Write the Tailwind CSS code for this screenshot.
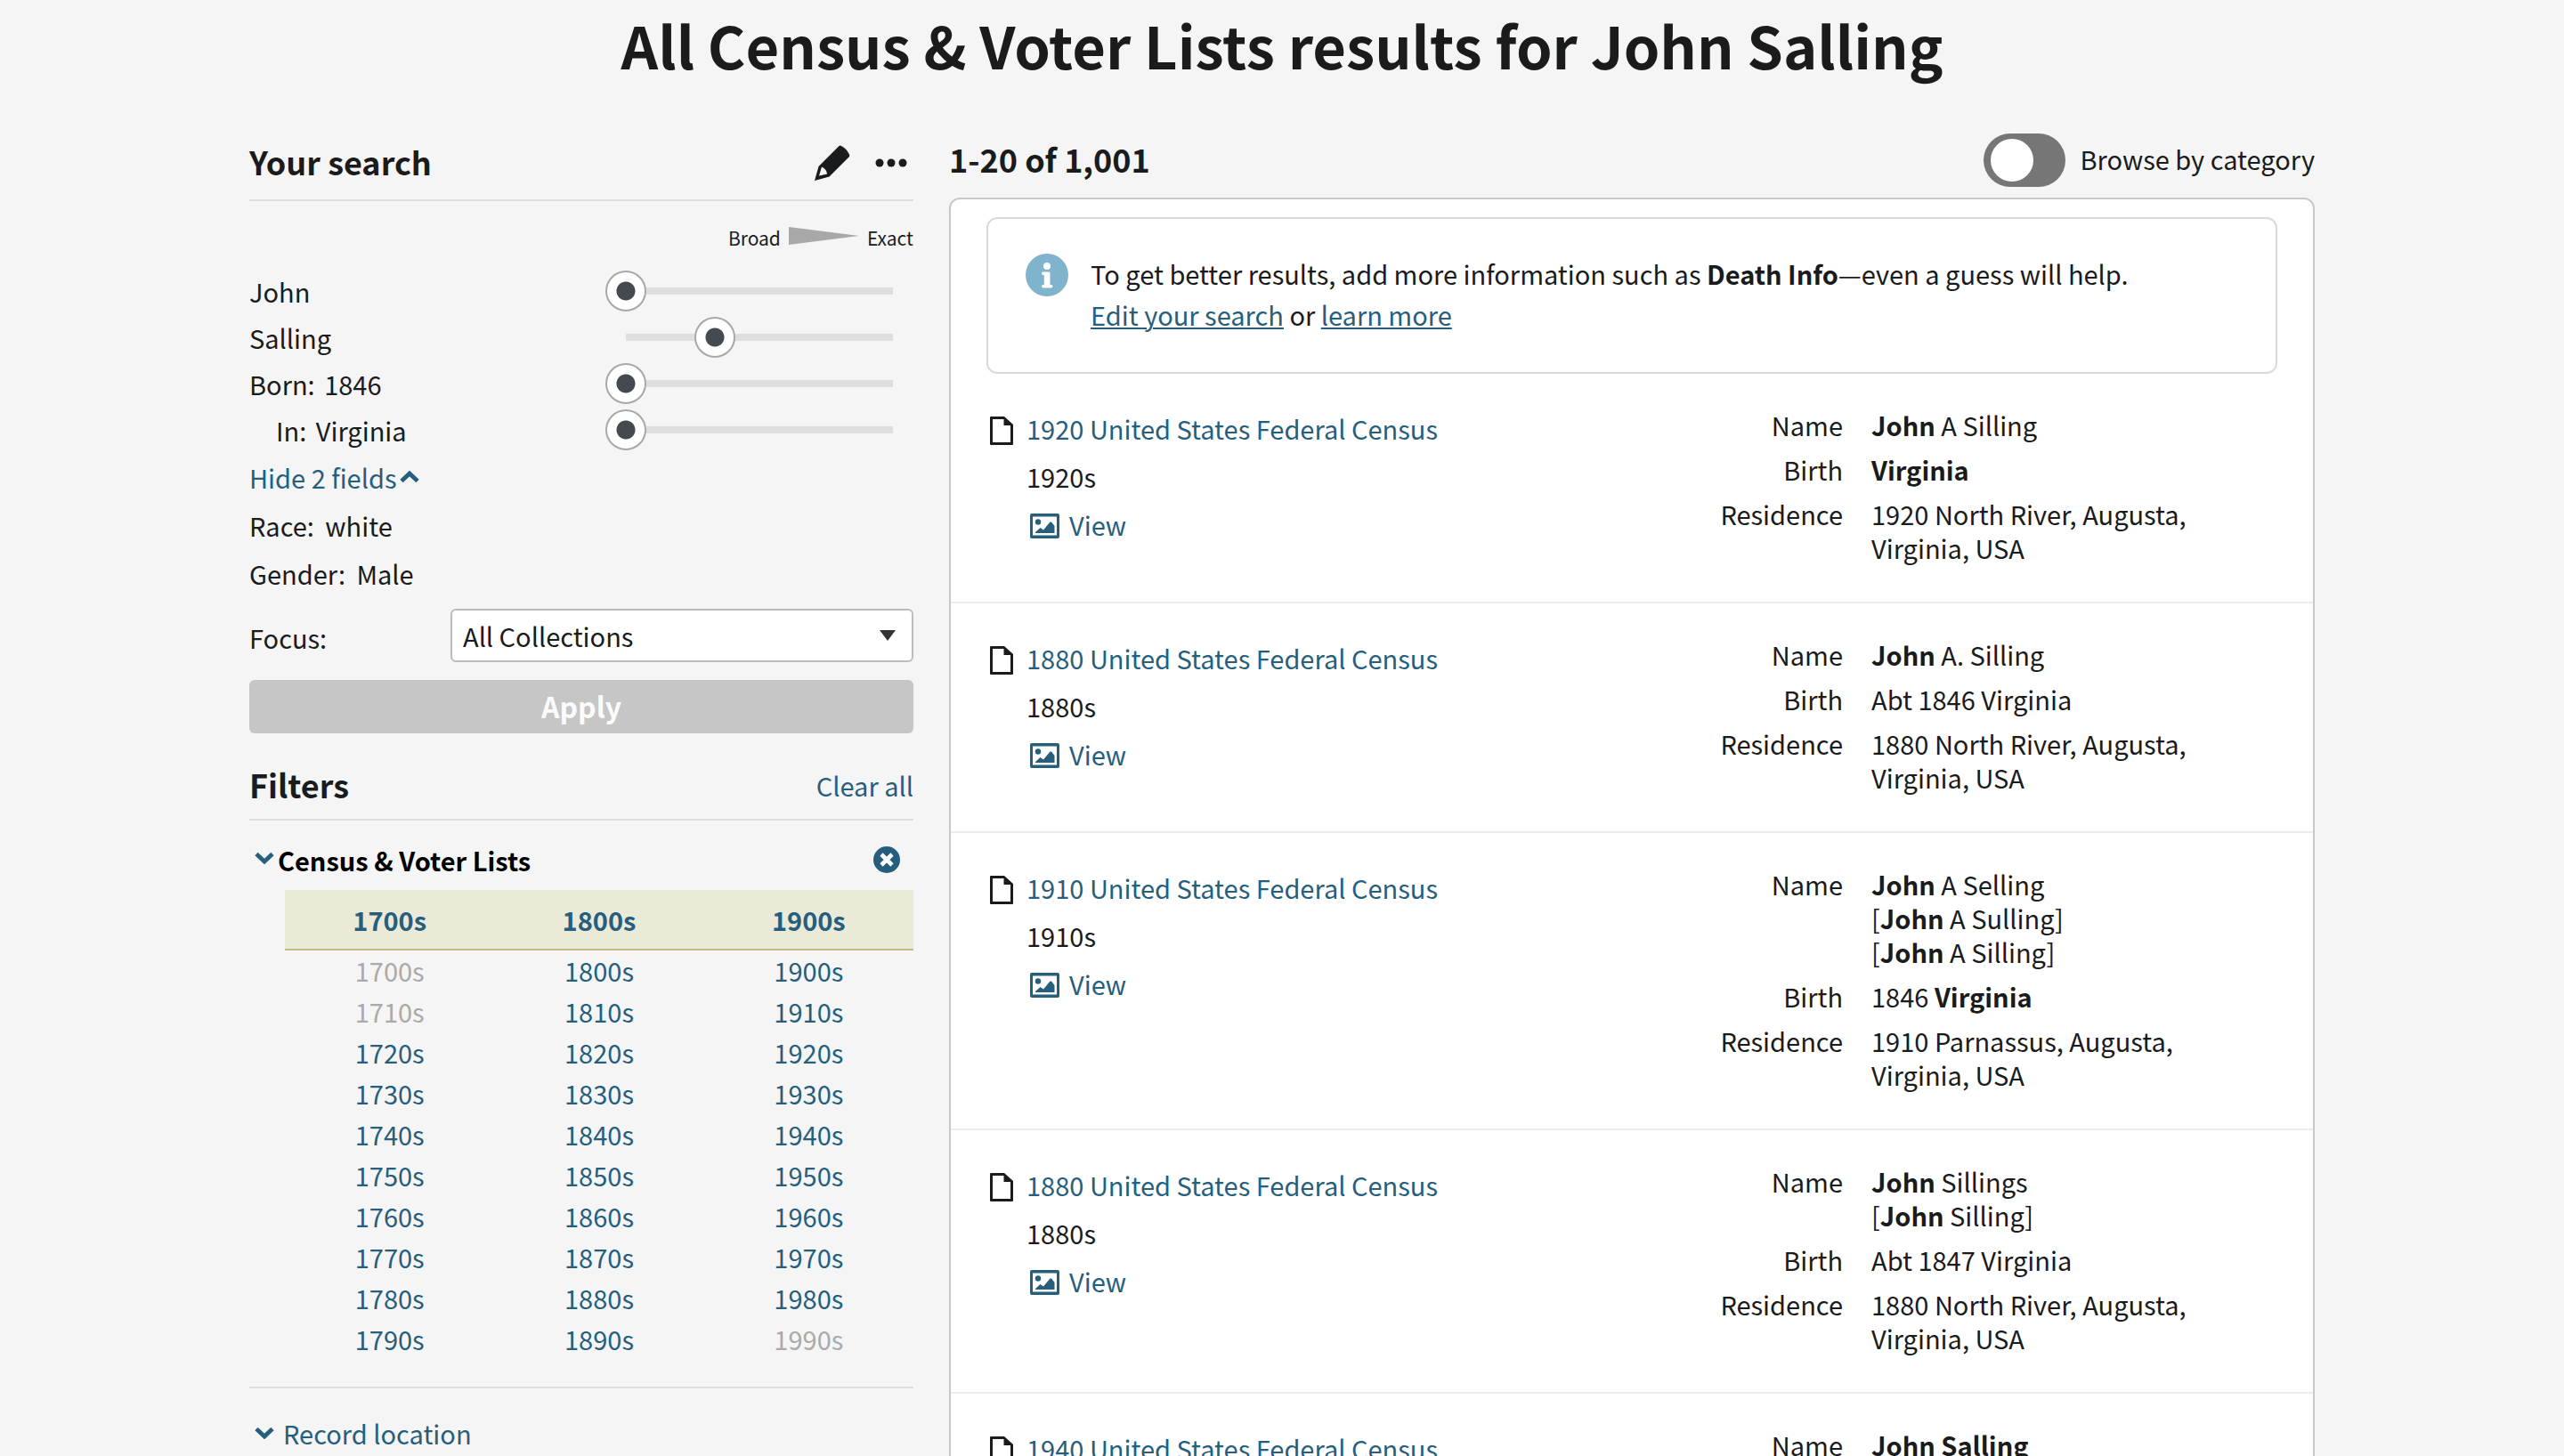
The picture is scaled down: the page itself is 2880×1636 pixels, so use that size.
<!DOCTYPE html>
<html lang="en">
<head>
<meta charset="utf-8">
<title>All Census &amp; Voter Lists results for John Salling</title>
<script src="https://cdn.jsdelivr.net/npm/@tailwindcss/browser@4"></script>
</head>
<body class="h-screen overflow-hidden bg-[#f5f5f5] font-['Noto_Sans_CJK_SC',sans-serif] text-[29px] leading-[46px] text-[#1a1b1c]">
<svg class="hidden">
  <symbol id="chevron" viewBox="0 0 22 14"><path d="M2 2.500l9 8.500 9-8.500" fill="none" stroke="currentColor" stroke-width="4.800"/></symbol>
  <symbol id="page" viewBox="0 0 26 32"><path fill-rule="evenodd" fill="currentColor" d="M0 1Q0 0 1 0H16L26 9V31Q26 32 25 32H1Q0 32 0 31ZM3 3V29H23V10H15.500V3Z"/></symbol>
  <symbol id="image" viewBox="0 0 33 28"><path fill-rule="evenodd" fill="currentColor" d="M2 0H31Q33 0 33 2V26Q33 28 31 28H2Q0 28 0 26V2Q0 0 2 0ZM3 3.500V24.500H30V3.500Z"/><circle cx="9" cy="9.500" r="3.200" fill="currentColor"/><path fill="currentColor" d="M6 22V21L11.500 16L15 18.500L22.500 9.500H24L27.500 14V22Z"/></symbol>
</svg>
<div class="mx-auto flex w-full max-w-[2320px] flex-col">
  <h1 class="text-center text-[65px] leading-[100px] font-bold">All Census &amp; Voter Lists results for John Salling</h1>
  <div class="flex items-start gap-10 pt-[50px]">
    <aside class="w-[746px] shrink-0">
      <div class="flex h-[76px] items-center justify-between border-b-2 border-[#dedede] pb-2">
        <h2 class="pb-1 text-[36px] font-bold">Your search</h2>
        <div class="flex items-center gap-7 pr-[7px]">
          <button type="button" aria-label="Edit search"><svg class="h-10 w-10" viewBox="0 0 40 40"><path fill="#1a1b1c" fill-rule="evenodd" d="M0 40L4.500 24L27 1.500Q28.500 0 30 1Q36 4 39 10.500Q40 12 38.500 13.500L16.500 35.500ZM5 34.500L14 32.500Q13.500 27 8 24.500Z"/></svg></button>
          <button type="button" aria-label="More options"><svg class="h-9 w-9" viewBox="0 0 36 36" fill="#1a1b1c"><circle cx="5" cy="18" r="4.500"/><circle cx="18" cy="18" r="4.500"/><circle cx="31" cy="18" r="4.500"/></svg></button>
        </div>
      </div>
      <div class="flex h-[75px] items-center justify-end gap-[9px] pt-[6px] text-[21px]">
        <span>Broad</span>
        <svg class="mb-1 h-5 w-[79px]" viewBox="0 0 79 20"><path fill="#a8a8a8" d="M0 0L79 10L0 20Z"/></svg>
        <span>Exact</span>
      </div>
      <div class="flex h-[52px] items-center justify-between"><label for="r1">John</label><input id="r1" type="range" min="0" max="3" value="0" class="h-[46px] w-[346px] appearance-none bg-[linear-gradient(#dedede,#dedede)] bg-[length:300px_8px] bg-center bg-no-repeat [&::-webkit-slider-thumb]:h-[46px] [&::-webkit-slider-thumb]:w-[46px] [&::-webkit-slider-thumb]:appearance-none [&::-webkit-slider-thumb]:rounded-full [&::-webkit-slider-thumb]:border-2 [&::-webkit-slider-thumb]:border-[#a8a8a8] [&::-webkit-slider-thumb]:bg-[radial-gradient(circle,#454a50_10px,#fff_11px)]"></div>
      <div class="flex h-[52px] items-center justify-between"><label for="r2">Salling</label><input id="r2" type="range" min="0" max="3" value="1" class="h-[46px] w-[346px] appearance-none bg-[linear-gradient(#dedede,#dedede)] bg-[length:300px_8px] bg-center bg-no-repeat [&::-webkit-slider-thumb]:h-[46px] [&::-webkit-slider-thumb]:w-[46px] [&::-webkit-slider-thumb]:appearance-none [&::-webkit-slider-thumb]:rounded-full [&::-webkit-slider-thumb]:border-2 [&::-webkit-slider-thumb]:border-[#a8a8a8] [&::-webkit-slider-thumb]:bg-[radial-gradient(circle,#454a50_10px,#fff_11px)]"></div>
      <div class="flex h-[52px] items-center justify-between"><label for="r3">Born: <span class="ml-1">1846</span></label><input id="r3" type="range" min="0" max="3" value="0" class="h-[46px] w-[346px] appearance-none bg-[linear-gradient(#dedede,#dedede)] bg-[length:300px_8px] bg-center bg-no-repeat [&::-webkit-slider-thumb]:h-[46px] [&::-webkit-slider-thumb]:w-[46px] [&::-webkit-slider-thumb]:appearance-none [&::-webkit-slider-thumb]:rounded-full [&::-webkit-slider-thumb]:border-2 [&::-webkit-slider-thumb]:border-[#a8a8a8] [&::-webkit-slider-thumb]:bg-[radial-gradient(circle,#454a50_10px,#fff_11px)]"></div>
      <div class="flex h-[52px] items-center justify-between pl-[30px]"><label for="r4">In: <span class="ml-1">Virginia</span></label><input id="r4" type="range" min="0" max="3" value="0" class="h-[46px] w-[346px] appearance-none bg-[linear-gradient(#dedede,#dedede)] bg-[length:300px_8px] bg-center bg-no-repeat [&::-webkit-slider-thumb]:h-[46px] [&::-webkit-slider-thumb]:w-[46px] [&::-webkit-slider-thumb]:appearance-none [&::-webkit-slider-thumb]:rounded-full [&::-webkit-slider-thumb]:border-2 [&::-webkit-slider-thumb]:border-[#a8a8a8] [&::-webkit-slider-thumb]:bg-[radial-gradient(circle,#454a50_10px,#fff_11px)]"></div>
      <button type="button" class="flex h-[54px] items-center gap-1 text-[#265e7e]">Hide 2 fields<svg class="h-[14px] w-[22px] rotate-180"><use href="#chevron"/></svg></button>
      <p class="leading-[54px]">Race: <span class="ml-[6px]">white</span></p>
      <p class="leading-[54px]">Gender: <span class="ml-[6px]">Male</span></p>
      <div class="mt-[13px] flex items-center justify-between">
        <label for="focus" class="pt-1">Focus:</label>
        <div class="relative w-[520px]">
          <select id="focus" class="block h-[60px] w-full appearance-none rounded-md border-2 border-[#bcbcbc] bg-white pl-3 leading-[46px]"><option>All Collections</option></select>
          <svg class="pointer-events-none absolute top-6 right-5 h-3 w-[18px]" viewBox="0 0 18 12"><path fill="#333" d="M0 0H18L9 12Z"/></svg>
        </div>
      </div>
      <button type="button" class="mt-5 h-[60px] w-full rounded-md bg-[#c6c6c6] pb-[2px] text-[32px] font-bold text-[#fbfbfb]">Apply</button>
      <div class="mt-8 flex h-[66px] items-start justify-between border-b-2 border-[#dedede]">
        <h2 class="text-[36px] leading-[50px] font-bold">Filters</h2>
        <a href="#" class="leading-[52px] text-[#265e7e]">Clear all</a>
      </div>
      <div class="flex h-[78px] items-center justify-between pt-[10px] pr-[15px] pl-[6px]">
        <button type="button" class="flex items-center gap-1 font-bold text-black"><svg class="mb-1 h-[14px] w-[22px] text-[#265e7e]"><use href="#chevron"/></svg>Census &amp; Voter Lists</button>
        <button type="button" aria-label="Remove filter"><svg class="h-[30px] w-[30px]" viewBox="0 0 30 30"><circle cx="15" cy="15" r="15" fill="#265e7e"/><path d="M9 9l12 12M21 9L9 21" stroke="#fff" stroke-width="4.600"/></svg></button>
      </div>
      <div class="border-b-2 border-[#dedede] pb-[30px] pl-10">
        <table class="w-full table-fixed text-center text-[#265e7e]">
          <thead><tr class="border-b-2 border-[#c3bc80] bg-[#ebead9]"><th class="h-[67px] leading-[64px]"><a href="#">1700s</a></th><th><a href="#">1800s</a></th><th><a href="#">1900s</a></th></tr></thead>
          <tbody class="leading-[44px] [&_td]:pb-[2px]">
            <tr><td class="text-[#aaa]">1700s</td><td><a href="#">1800s</a></td><td><a href="#">1900s</a></td></tr>
            <tr><td class="text-[#aaa]">1710s</td><td><a href="#">1810s</a></td><td><a href="#">1910s</a></td></tr>
            <tr><td><a href="#">1720s</a></td><td><a href="#">1820s</a></td><td><a href="#">1920s</a></td></tr>
            <tr><td><a href="#">1730s</a></td><td><a href="#">1830s</a></td><td><a href="#">1930s</a></td></tr>
            <tr><td><a href="#">1740s</a></td><td><a href="#">1840s</a></td><td><a href="#">1940s</a></td></tr>
            <tr><td><a href="#">1750s</a></td><td><a href="#">1850s</a></td><td><a href="#">1950s</a></td></tr>
            <tr><td><a href="#">1760s</a></td><td><a href="#">1860s</a></td><td><a href="#">1960s</a></td></tr>
            <tr><td><a href="#">1770s</a></td><td><a href="#">1870s</a></td><td><a href="#">1970s</a></td></tr>
            <tr><td><a href="#">1780s</a></td><td><a href="#">1880s</a></td><td><a href="#">1980s</a></td></tr>
            <tr><td><a href="#">1790s</a></td><td><a href="#">1890s</a></td><td class="text-[#aaa]">1990s</td></tr>
          </tbody>
        </table>
      </div>
      <button type="button" class="mt-[27px] ml-[6px] flex items-center gap-[10px] text-[#265e7e]"><svg class="h-[14px] w-[22px]"><use href="#chevron"/></svg>Record location</button>
    </aside>

    <main class="min-w-0 flex-1">
      <div class="flex h-[72px] items-start justify-between">
        <h2 class="text-[36px] leading-[56px] font-bold">1-20 of 1,001</h2>
        <label class="flex items-center gap-4 leading-[56px]">
          <input type="checkbox" role="switch" class="flex h-[60px] w-[92px] appearance-none items-center rounded-full bg-[#767676] px-2 before:size-12 before:rounded-full before:bg-white">
          <span class="pb-1">Browse by category</span>
        </label>
      </div>
      <div class="rounded-xl border-2 border-[#c8c8c8] bg-white">
        <div class="mx-10 mt-5 flex h-[176px] gap-[25px] rounded-xl border-2 border-[#dadada] pt-[38px] pl-[42px]">
          <svg class="mt-px h-12 w-12 shrink-0" viewBox="0 0 48 48"><circle cx="24" cy="24" r="24" fill="#80b3cc"/><g fill="#fff"><circle cx="24" cy="14" r="4"/><path d="M19.500 20.500H26.500Q27.500 20.500 27.500 21.500V35H29Q30.500 35 30.500 36.500T29 38.500H19.500Q18 38.500 18 36.700T19.500 35H20.800V24H19.500Q18 24 18 22.300T19.500 20.500Z"/></g></svg>
          <p>To get better results, add more information such as <b>Death Info</b>—even a guess will help.<br><a href="#" class="text-[#265e7e] underline decoration-2 underline-offset-2">Edit your search</a> or <a href="#" class="text-[#265e7e] underline decoration-2 underline-offset-2">learn more</a></p>
        </div>
        <article class="flex justify-between border-b-2 border-[#ececec] pt-[38px] pr-10 pb-[42px] pl-11">
          <div class="flex gap-[15px]"><svg class="mt-[10px] h-8 w-[26px]"><use href="#page"/></svg><div class="flex flex-col gap-2"><a href="#" class="text-[#265e7e]">1920 United States Federal Census</a><p>1920s</p><a href="#" class="flex items-center gap-[11px] pl-1 text-[#265e7e]"><svg class="mt-1 h-7 w-[33px]"><use href="#image"/></svg>View</a></div></div>
          <dl class="grid w-[648px] grid-cols-[160px_1fr] content-start gap-x-8 gap-y-3 leading-[38px] [&_dt]:text-right"><dt>Name</dt><dd><b>John</b> A Silling</dd><dt>Birth</dt><dd><b>Virginia</b></dd><dt>Residence</dt><dd>1920 North River, Augusta,<br>Virginia, USA</dd></dl>
        </article>
        <article class="flex justify-between border-b-2 border-[#ececec] pt-[38px] pr-10 pb-[42px] pl-11">
          <div class="flex gap-[15px]"><svg class="mt-[10px] h-8 w-[26px]"><use href="#page"/></svg><div class="flex flex-col gap-2"><a href="#" class="text-[#265e7e]">1880 United States Federal Census</a><p>1880s</p><a href="#" class="flex items-center gap-[11px] pl-1 text-[#265e7e]"><svg class="mt-1 h-7 w-[33px]"><use href="#image"/></svg>View</a></div></div>
          <dl class="grid w-[648px] grid-cols-[160px_1fr] content-start gap-x-8 gap-y-3 leading-[38px] [&_dt]:text-right"><dt>Name</dt><dd><b>John</b> A. Silling</dd><dt>Birth</dt><dd>Abt 1846 Virginia</dd><dt>Residence</dt><dd>1880 North River, Augusta,<br>Virginia, USA</dd></dl>
        </article>
        <article class="flex justify-between border-b-2 border-[#ececec] pt-[38px] pr-10 pb-[42px] pl-11">
          <div class="flex gap-[15px]"><svg class="mt-[10px] h-8 w-[26px]"><use href="#page"/></svg><div class="flex flex-col gap-2"><a href="#" class="text-[#265e7e]">1910 United States Federal Census</a><p>1910s</p><a href="#" class="flex items-center gap-[11px] pl-1 text-[#265e7e]"><svg class="mt-1 h-7 w-[33px]"><use href="#image"/></svg>View</a></div></div>
          <dl class="grid w-[648px] grid-cols-[160px_1fr] content-start gap-x-8 gap-y-3 leading-[38px] [&_dt]:text-right"><dt>Name</dt><dd><b>John</b> A Selling<br>[<b>John</b> A Sulling]<br>[<b>John</b> A Silling]</dd><dt>Birth</dt><dd>1846 <b>Virginia</b></dd><dt>Residence</dt><dd>1910 Parnassus, Augusta,<br>Virginia, USA</dd></dl>
        </article>
        <article class="flex justify-between border-b-2 border-[#ececec] pt-[38px] pr-10 pb-[42px] pl-11">
          <div class="flex gap-[15px]"><svg class="mt-[10px] h-8 w-[26px]"><use href="#page"/></svg><div class="flex flex-col gap-2"><a href="#" class="text-[#265e7e]">1880 United States Federal Census</a><p>1880s</p><a href="#" class="flex items-center gap-[11px] pl-1 text-[#265e7e]"><svg class="mt-1 h-7 w-[33px]"><use href="#image"/></svg>View</a></div></div>
          <dl class="grid w-[648px] grid-cols-[160px_1fr] content-start gap-x-8 gap-y-3 leading-[38px] [&_dt]:text-right"><dt>Name</dt><dd><b>John</b> Sillings<br>[<b>John</b> Silling]</dd><dt>Birth</dt><dd>Abt 1847 Virginia</dd><dt>Residence</dt><dd>1880 North River, Augusta,<br>Virginia, USA</dd></dl>
        </article>
        <article class="flex justify-between pt-[38px] pr-10 pb-[42px] pl-11">
          <div class="flex gap-[15px]"><svg class="mt-[10px] h-8 w-[26px]"><use href="#page"/></svg><a href="#" class="text-[#265e7e]">1940 United States Federal Census</a></div>
          <dl class="grid w-[648px] grid-cols-[160px_1fr] content-start gap-x-8 gap-y-3 leading-[38px] [&_dt]:text-right"><dt>Name</dt><dd><b>John Salling</b></dd></dl>
        </article>
      </div>
    </main>
  </div>
</div>
</body>
</html>
